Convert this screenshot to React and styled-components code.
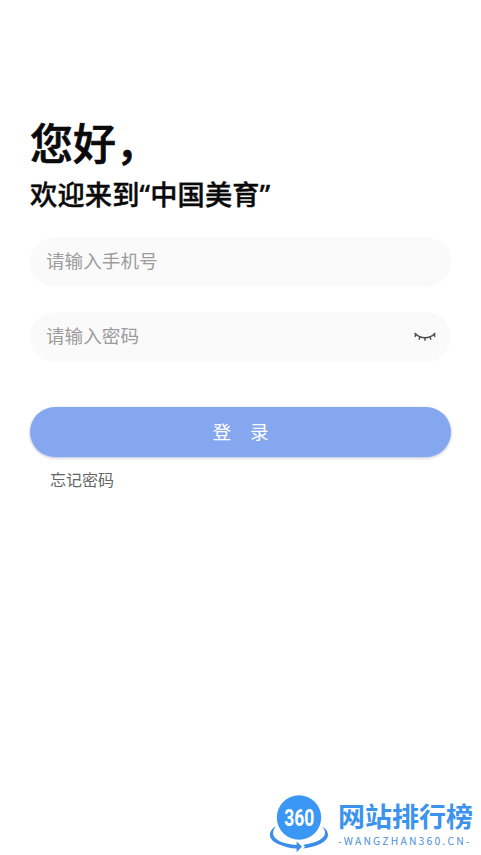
import React, { useState } from 'react'
import styled, { createGlobalStyle } from 'styled-components'

export default function App() {
    const [phone, setPhone] = useState('')
    const [password, setPassword] = useState('')
  return (
    <>
    <GlobalStyle />
    <Root>
        <Title>您好，</Title>
        <SubTitle>欢迎来到“中国美育”</SubTitle>
        <Form onSubmit={(e) => e.preventDefault()}>
            <Field>
                <input type='text' placeholder='请输入手机号' value={phone} onChange={(e) => setPhone(e.target.value)} />
            </Field>
            <Field>
                <input type='password' placeholder='请输入密码' value={password} onChange={(e) => setPassword(e.target.value)} />
                <ClosedEye />
            </Field>
            <LoginButton><span>登</span><span>录</span></LoginButton>
        </Form>
        <Forgot href='#forgot'>忘记密码</Forgot>
        <Brand>
            <BrandLogo />
            <BrandText>
                <h2>网站排行榜</h2>
                <p>-WANGZHAN360.CN-</p>
            </BrandText>
        </Brand>
    </Root>
    </>
  )
}

function ClosedEye() {
  return (
    <svg width='22' height='12' viewBox='0 0 22 12' fill='none' stroke='#4a4a4a' strokeWidth='1.4' strokeLinecap='round'>
        <path d='M1 2.6C6.5 8.2 15.5 8.2 21 2.6' />
        <path d='M1.8 3L1.2 5.4M6 6L5.2 8.2M11 6.9V9.2M16 6L16.8 8.2M20.2 3L20.8 5.4' />
    </svg>
  )
}

function BrandLogo() {
  return (
    <svg width='60' height='60' viewBox='0 0 60 60'>
        <circle cx='30' cy='22.5' r='22.2' fill='#3b97f6' />
        <text x='15.3' y='31.2' textLength='30' lengthAdjust='spacingAndGlyphs' fill='#fff' fontFamily='Roboto, sans-serif' fontWeight='700' fontSize='24'>360</text>
        <path d='M7 31C-2 37 -1 44.5 9 49C15 51.8 21 53.3 27.6 53.6V57.2L33 51.6L27.6 46.4V50C21 49.8 14 48.2 9.5 45.6C3 41.8 2.5 37 7 31Z' fill='#3b8ee8' />
        <path d='M53 31C61.5 37 61 44 51.5 48.8C46.5 51.3 40.5 53 34.2 53.5L36 51.6L34.2 49.7C40 49.2 46 47.5 50.5 45C57.3 41.2 57.5 36.5 53 31Z' fill='#3b8ee8' />
    </svg>
  )
}

const GlobalStyle = createGlobalStyle`
    *{
        box-sizing: border-box;
    }
    body{
        margin: 0;
        background: #fff;
    }
`
const Root = styled.div`
    display: flex;
    flex-direction: column;
    height: 855px;
    padding: 119px 30px 0px;
    overflow: hidden;
    font-family: Roboto, 'Noto Sans CJK SC', sans-serif;
`
const Title = styled.h1`
    margin: 0;
    height: 53px;
    line-height: 52px;
    font-size: 43px;
    font-weight: 500;
    color: #0a0a0a;
    -webkit-text-stroke: 0.7px #0a0a0a;
`
const SubTitle = styled.h3`
    margin: 0;
    height: 46px;
    line-height: 46px;
    font-family: 'Noto Sans', 'Noto Sans CJK SC', sans-serif;
    font-size: 27.2px;
    font-weight: 500;
    letter-spacing: 0.2px;
    color: #0a0a0a;
    -webkit-text-stroke: 0.4px #0a0a0a;
    white-space: nowrap;
`
const Form = styled.form`
    display: flex;
    flex-direction: column;
    gap: 25px;
    margin-top: 19px;
`
const Field = styled.label`
    display: flex;
    align-items: center;
    height: 50px;
    padding: 0px 15px 0px 16px;
    border-radius: 25px;
    background: #fafafa;
    input{
        flex: 1;
        min-width: 0;
        padding: 0;
        border: none;
        outline: none;
        background: none;
        font-family: inherit;
        font-size: 18.6px;
        color: #333;
        &::placeholder{
            color: #9c9c9c;
        }
    }
`
const LoginButton = styled.button`
    display: flex;
    align-items: center;
    justify-content: center;
    gap: 19px;
    height: 50px;
    margin-top: 20px;
    padding: 0px 0px 3px;
    border: none;
    border-radius: 25px;
    background: #85a7f0;
    box-shadow: 0px 1px 3px rgba(80, 100, 150, 0.4);
    font-family: inherit;
    font-size: 18.6px;
    color: #fff;
    cursor: pointer;
`
const Forgot = styled.a`
    align-self: flex-start;
    margin: 12px 0px 0px 20px;
    line-height: 24px;
    font-size: 16px;
    color: #666;
    text-decoration: none;
`
const Brand = styled.div`
    display: flex;
    align-self: flex-end;
    gap: 9px;
    height: 60px;
    margin: auto -22px 0px 0px;
`
const BrandText = styled.div`
    width: 135px;
    h2{
        margin: 5px 0px 0px;
        line-height: 36px;
        font-size: 27px;
        font-weight: 700;
        color: #3b93ee;
    }
    p{
        margin: -2px 0px 0px;
        line-height: 13px;
        font-family: 'Noto Sans CJK SC', sans-serif;
        font-size: 10.4px;
        letter-spacing: 2.15px;
        color: #4b90dc;
        white-space: nowrap;
    }
`
